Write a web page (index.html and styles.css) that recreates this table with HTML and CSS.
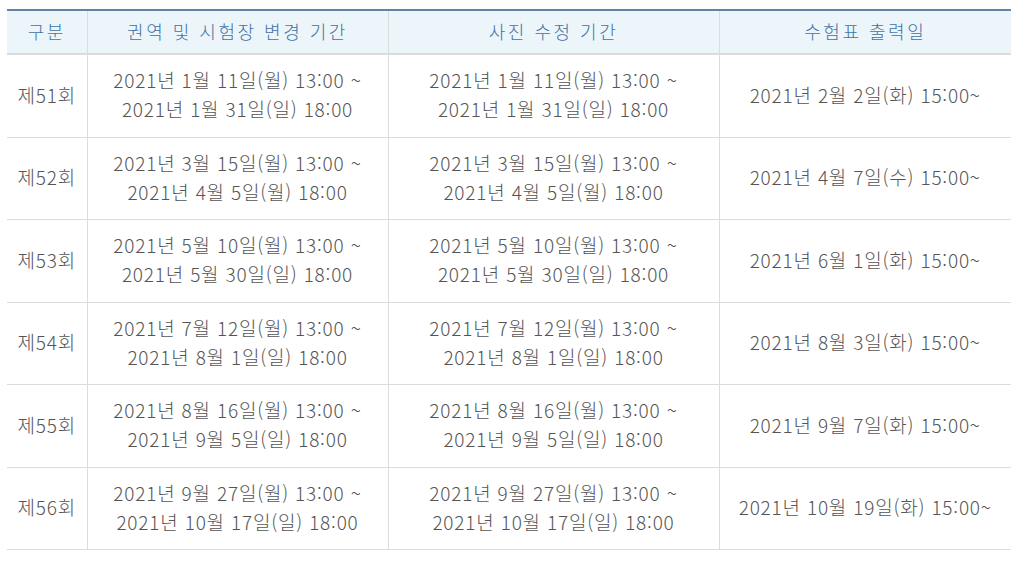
FILE: index.html
```html
<!DOCTYPE html>
<html lang="ko">

<head>
    <title>시험 일정</title>
    <meta charset="UTF-8">
    <meta name="viewport" content="width=device-width, initial-scale=1">
    <link rel="stylesheet" href="styles.css">
</head>

<body>
    <table class="schedule">
        <colgroup>
            <col class="c1">
            <col class="c2">
            <col class="c3">
            <col class="c4">
        </colgroup>
        <thead>
            <tr>
                <th>구분</th>
                <th>권역 및 시험장 변경 기간</th>
                <th>사진 수정 기간</th>
                <th>수험표 출력일</th>
            </tr>
        </thead>
        <tbody>
            <tr>
                <td>제51회</td>
                <td>2021년 1월 11일(월) 13:00 ~<br>2021년 1월 31일(일) 18:00</td>
                <td>2021년 1월 11일(월) 13:00 ~<br>2021년 1월 31일(일) 18:00</td>
                <td>2021년 2월 2일(화) 15:00~</td>
            </tr>
            <tr>
                <td>제52회</td>
                <td>2021년 3월 15일(월) 13:00 ~<br>2021년 4월 5일(월) 18:00</td>
                <td>2021년 3월 15일(월) 13:00 ~<br>2021년 4월 5일(월) 18:00</td>
                <td>2021년 4월 7일(수) 15:00~</td>
            </tr>
            <tr>
                <td>제53회</td>
                <td>2021년 5월 10일(월) 13:00 ~<br>2021년 5월 30일(일) 18:00</td>
                <td>2021년 5월 10일(월) 13:00 ~<br>2021년 5월 30일(일) 18:00</td>
                <td>2021년 6월 1일(화) 15:00~</td>
            </tr>
            <tr>
                <td>제54회</td>
                <td>2021년 7월 12일(월) 13:00 ~<br>2021년 8월 1일(일) 18:00</td>
                <td>2021년 7월 12일(월) 13:00 ~<br>2021년 8월 1일(일) 18:00</td>
                <td>2021년 8월 3일(화) 15:00~</td>
            </tr>
            <tr>
                <td>제55회</td>
                <td>2021년 8월 16일(월) 13:00 ~<br>2021년 9월 5일(일) 18:00</td>
                <td>2021년 8월 16일(월) 13:00 ~<br>2021년 9월 5일(일) 18:00</td>
                <td>2021년 9월 7일(화) 15:00~</td>
            </tr>
            <tr>
                <td>제56회</td>
                <td>2021년 9월 27일(월) 13:00 ~<br>2021년 10월 17일(일) 18:00</td>
                <td>2021년 9월 27일(월) 13:00 ~<br>2021년 10월 17일(일) 18:00</td>
                <td>2021년 10월 19일(화) 15:00~</td>
            </tr>
        </tbody>
    </table>
</body>

</html>
```

FILE: styles.css
```css
body {
    margin: 0;
    padding: 9px 7px 0;
    background: #fff;
    font-family: "Noto Sans CJK KR", "Noto Sans", sans-serif;
}

.schedule {
    width: 1004px;
    border-collapse: collapse;
    table-layout: fixed;
    border-top: 2px solid #5f84a6;
}

.schedule .c1 {
    width: 80px;
}

.schedule .c2 {
    width: 301px;
}

.schedule .c3 {
    width: 331px;
}

.schedule .c4 {
    width: 292px;
}

.schedule th {
    height: 40px;
    padding: 0 0 2px;
    background: #ecf5fa;
    color: #3f73a3;
    font-size: 18px;
    font-weight: 300;
    letter-spacing: 2.5px;
    border-left: 1px solid #d8dde1;
    border-bottom: 2px solid #dcdcdc;
}

.schedule td {
    height: 78.5px;
    padding: 0 0 3px;
    text-align: center;
    color: #555;
    font-size: 19px;
    font-weight: 300;
    letter-spacing: 0.8px;
    line-height: 29px;
    border-left: 1px solid #dcdcdc;
    border-bottom: 1px solid #dcdcdc;
}

.schedule th:first-child,
.schedule td:first-child {
    border-left: none;
}
```
